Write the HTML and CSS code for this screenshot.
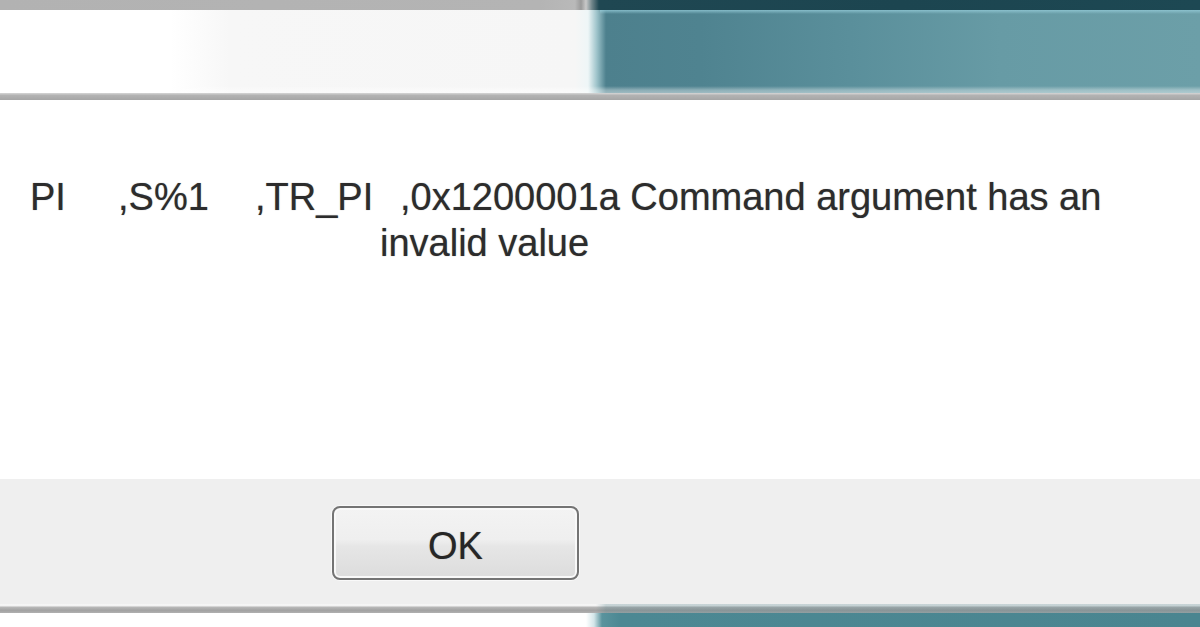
FILE: index.html
```html
<!DOCTYPE html>
<html lang="en">
<head>
<meta charset="utf-8">
<title>Error</title>
<link rel="stylesheet" href="styles.css">
</head>
<body>
<div class="screen">
  <div class="top-strip"></div>
  <div class="title-band"></div>
  <div class="rule rule-top"></div>
  <div class="content">
    <div class="message-row">
      <span class="field f1">PI</span>
      <span class="field f2">,S%1</span>
      <span class="field f3">,TR_PI</span>
      <p class="msg">,0x1200001a Command argument has an invalid value</p>
    </div>
  </div>
  <div class="footer">
    <button class="btn" type="button">OK</button>
  </div>
  <div class="rule rule-bottom"></div>
  <div class="below"></div>
</div>
</body>
</html>
```

FILE: styles.css
```css
html, body {
  margin: 0;
  padding: 0;
  background: #ffffff;
}

.screen {
  width: 1200px;
  height: 627px;
  overflow: hidden;
  display: flex;
  flex-direction: column;
  font-family: "Liberation Sans", Arial, sans-serif;
}

.top-strip {
  height: 10px;
  flex: none;
  background: linear-gradient(90deg, #b2b2b2 0, #b4b4b4 540px, #b9b9b9 575px, #9a9a9a 581px, #c9c9c9 586px, #6f8489 592px, #1f4752 599px, #1c4550 900px, #1d4853 1200px);
}

.title-band {
  height: 83px;
  flex: none;
  background:
    linear-gradient(180deg, rgba(150, 205, 218, 0.75) 0, rgba(150, 205, 218, 0) 4px) 600px 0 / 600px 100% no-repeat,
    linear-gradient(180deg, rgba(0, 0, 0, 0) 0, rgba(0, 0, 0, 0) 76px, rgba(255, 255, 255, 0.35) 80px, rgba(255, 255, 255, 0.45) 83px),
    linear-gradient(90deg, #ffffff 0, #ffffff 170px, #f7f7f7 230px, #f6f6f6 575px, #eef6f7 588px, #9cc2c9 597px, #4d808d 606px, #4f8390 700px, #5a8f9b 850px, #679ba5 1000px, #6c9fa8 1200px);
}

.rule {
  flex: none;
}

.rule-top {
  height: 7px;
  background: linear-gradient(180deg, #d6d6d6 0, #b2b2b2 35%, #a6a6a6 100%);
}

.content {
  height: 379px;
  flex: none;
  background: #ffffff;
  padding: 74px 0 0 30px;
  box-sizing: border-box;
}

.message-row {
  display: flex;
  align-items: flex-start;
  font-size: 38px;
  line-height: 46px;
  color: #2c2c2c;
  text-shadow: 0 0 1px rgba(30, 30, 30, 0.5);
}

.field {
  flex: none;
  white-space: pre;
}

.f1 { width: 88px; }
.f2 { width: 137px; }
.f3 { width: 125px; }

.msg {
  margin: 0;
  width: 765px;
  flex: none;
  text-indent: 20px;
}

.footer {
  height: 125px;
  flex: none;
  box-sizing: border-box;
  background: #efefef;
  padding: 27px 0 0 332px;
  display: flex;
  align-items: flex-start;
}

.btn {
  width: 247px;
  height: 74px;
  box-sizing: border-box;
  border: 2px solid #747474;
  border-radius: 8px;
  box-shadow: inset 0 0 0 2px #f9f9f9, 0 0 0 1px rgba(255, 255, 255, 0.6);
  background: linear-gradient(180deg, #f3f3f3 0, #efefef 45%, #e6e6e6 55%, #dcdcdc 100%);
  font-family: "Liberation Sans", Arial, sans-serif;
  font-size: 38px;
  color: #262626;
  padding: 6px 0 0 0;
  display: flex;
  align-items: center;
  justify-content: center;
  text-shadow: 0 0 1px rgba(30, 30, 30, 0.45);
}

.rule-bottom {
  height: 9px;
  background:
    linear-gradient(90deg, rgba(0, 0, 0, 0) 0, rgba(0, 0, 0, 0) 596px, rgba(60, 110, 120, 0.25) 606px, rgba(60, 110, 120, 0.25) 1200px),
    linear-gradient(180deg, #f7f7f7 0, #f2f2f2 20%, #b8b8b8 35%, #a2a2a2 70%, #b0b0b0 100%);
}

.below {
  flex: 1;
  background: linear-gradient(90deg, #ffffff 0, #ffffff 586px, #d3e6e9 594px, #5a939d 602px, #4c8893 620px, #4a8590 1200px);
}
```
